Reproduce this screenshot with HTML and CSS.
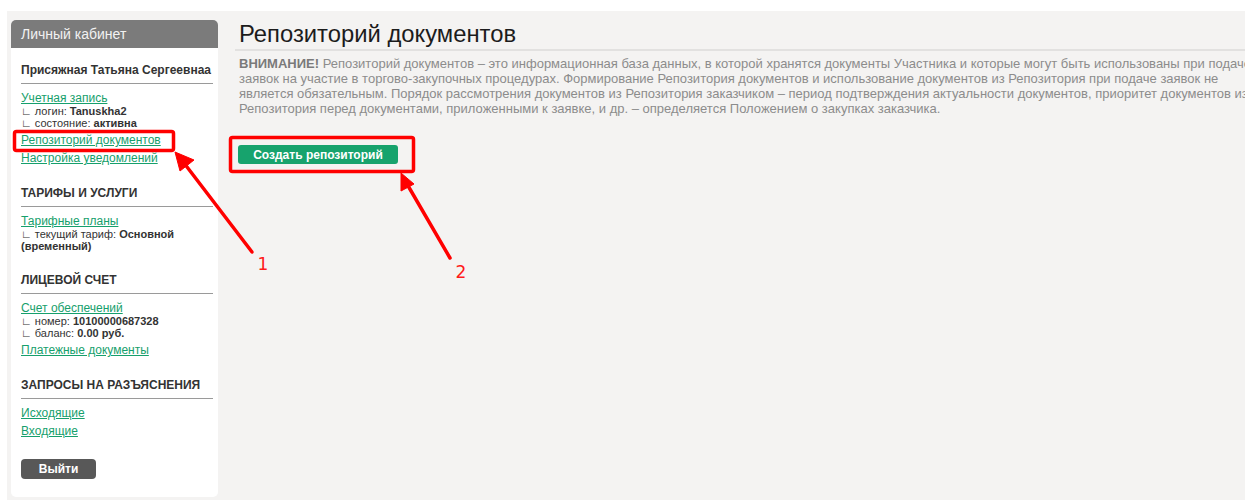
FILE: index.html
```html
<!DOCTYPE html>
<html lang="ru">
<head>
<meta charset="utf-8">
<title>Репозиторий документов</title>
<link rel="stylesheet" href="styles.css">
</head>
<body>
<div class="page">
  <aside class="cabinet">
    <div class="cabinet-head">Личный кабинет</div>
    <div class="cabinet-body">
      <div class="user-name">Присяжная Татьяна Сергеевнаа</div>

      <a class="nav-link" href="#">Учетная запись</a>
      <div class="info">
        <div>∟ логин: <b>Tanuskha2</b></div>
        <div>∟ состояние: <b>активна</b></div>
      </div>
      <a class="nav-link" href="#">Репозиторий документов</a>
      <a class="nav-link" href="#">Настройка уведомлений</a>

      <div class="section-title">Тарифы и услуги</div>
      <a class="nav-link" href="#">Тарифные планы</a>
      <div class="info">
        <div>∟ текущий тариф: <b>Основной (временный)</b></div>
      </div>

      <div class="section-title">Лицевой счет</div>
      <a class="nav-link" href="#">Счет обеспечений</a>
      <div class="info">
        <div>∟ номер: <b>10100000687328</b></div>
        <div>∟ баланс: <b>0.00 руб.</b></div>
      </div>
      <a class="nav-link" href="#">Платежные документы</a>

      <div class="section-title">Запросы на разъяснения</div>
      <a class="nav-link" href="#">Исходящие</a>
      <a class="nav-link" href="#">Входящие</a>

      <button class="logout" type="button">Выйти</button>
    </div>
  </aside>

  <main class="content">
    <h1 class="content-title">Репозиторий документов</h1>
    <p class="notice"><b>ВНИМАНИЕ!</b> Репозиторий документов – это информационная база данных, в которой хранятся документы Участника и которые могут быть использованы при подаче заявок на участие в торгово-закупочных процедурах. Формирование Репозитория документов и использование документов из Репозитория при подаче заявок не является обязательным. Порядок рассмотрения документов из Репозитория заказчиком – период подтверждения актуальности документов, приоритет документов из Репозитория перед документами, приложенными к заявке, и др. – определяется Положением о закупках заказчика.</p>
    <button class="create-btn" type="button">Создать репозиторий</button>
  </main>
</div>

<svg class="marks" width="1245" height="500" viewBox="0 0 1245 500">
  <rect x="14.5" y="131.5" width="159" height="19" rx="2" />
  <rect x="230.5" y="137.5" width="183" height="34" rx="2" />
  <line x1="252" y1="252" x2="184" y2="163" />
  <polygon class="head" points="175,152 194,160 180,171" />
  <line x1="450" y1="258" x2="407" y2="184" />
  <polygon class="head" points="401,173 414,184 401,191" />
  <text x="263" y="270">1</text>
  <text x="461" y="278">2</text>
</svg>
</body>
</html>
```

FILE: styles.css
```css
html, body {
  margin: 0;
  padding: 0;
  background: #ffffff;
  overflow: hidden;
  font-family: "Liberation Sans", Arial, sans-serif;
}

.page {
  margin: 11px 0 0 7px;
  width: 1300px;
  height: 489px;
  background: #f4f3f2;
  display: flex;
  align-items: flex-start;
  gap: 17px;
  padding: 9px 0 0 4px;
  box-sizing: border-box;
}

/* sidebar card */
.cabinet {
  width: 207px;
  flex: none;
  background: #ffffff;
  border-radius: 5px;
}

.cabinet-head {
  height: 28px;
  line-height: 29px;
  padding-left: 10px;
  background: #7b7b7b;
  color: #f2f2f2;
  font-size: 14px;
  border-radius: 5px 5px 0 0;
}

.cabinet-body {
  padding: 14px 5px 18px 10px;
  display: flex;
  flex-direction: column;
  align-items: flex-start;
}

.user-name,
.section-title {
  align-self: stretch;
  font-size: 12px;
  font-weight: bold;
  line-height: 16px;
  color: #333333;
  padding-bottom: 5px;
  border-bottom: 1px solid #9a9a9a;
  margin-bottom: 5px;
}

.section-title {
  margin-top: 18px;
  text-transform: uppercase;
}

.nav-link {
  font-size: 12px;
  line-height: 18px;
  color: #16a06c;
  text-decoration: underline;
}

.info {
  margin: -2px 0 2px;
  font-size: 11px;
  line-height: 12px;
  color: #333333;
}

.info b {
  color: #333333;
}

.logout {
  margin-top: 19px;
  width: 75px;
  height: 20px;
  border: none;
  border-radius: 4px;
  background: #585858;
  color: #ffffff;
  font-family: "Liberation Sans", Arial, sans-serif;
  font-size: 12px;
  font-weight: bold;
  padding: 0;
}

/* main column */
.content {
  flex: none;
  width: 1040px;
}

.content-title {
  margin: 0;
  padding: 1px 0 0 4px;
  font-size: 23.8px;
  font-weight: normal;
  line-height: 26px;
  color: #1c1c1c;
  border-bottom: 2px solid #e2e1e0;
  height: 28px;
}

.notice {
  margin: 5px 0 0 4px;
  width: 1030px;
  font-size: 13px;
  line-height: 15px;
  color: #8c8c8c;
}

.notice b {
  color: #7a7a7a;
}

.create-btn {
  margin: 29px 0 0 3px;
  width: 160px;
  height: 19px;
  border: none;
  border-radius: 3px;
  background: #17a36d;
  color: #ffffff;
  font-family: "Liberation Sans", Arial, sans-serif;
  font-size: 12px;
  font-weight: bold;
  padding: 0;
}

/* red callouts drawn over the page */
.marks {
  position: absolute;
  left: 0;
  top: 0;
  pointer-events: none;
}

.marks rect {
  fill: none;
  stroke: #ff0000;
  stroke-width: 3.5;
}

.marks line {
  stroke: #ff0000;
  stroke-width: 3.5;
  stroke-linecap: round;
}

.marks .head {
  fill: #ff0000;
  stroke: #ff0000;
  stroke-width: 1;
  stroke-linejoin: round;
}

.marks text {
  fill: #ff1a1a;
  font-family: "DejaVu Sans", sans-serif;
  font-size: 17px;
  text-anchor: middle;
}
```
